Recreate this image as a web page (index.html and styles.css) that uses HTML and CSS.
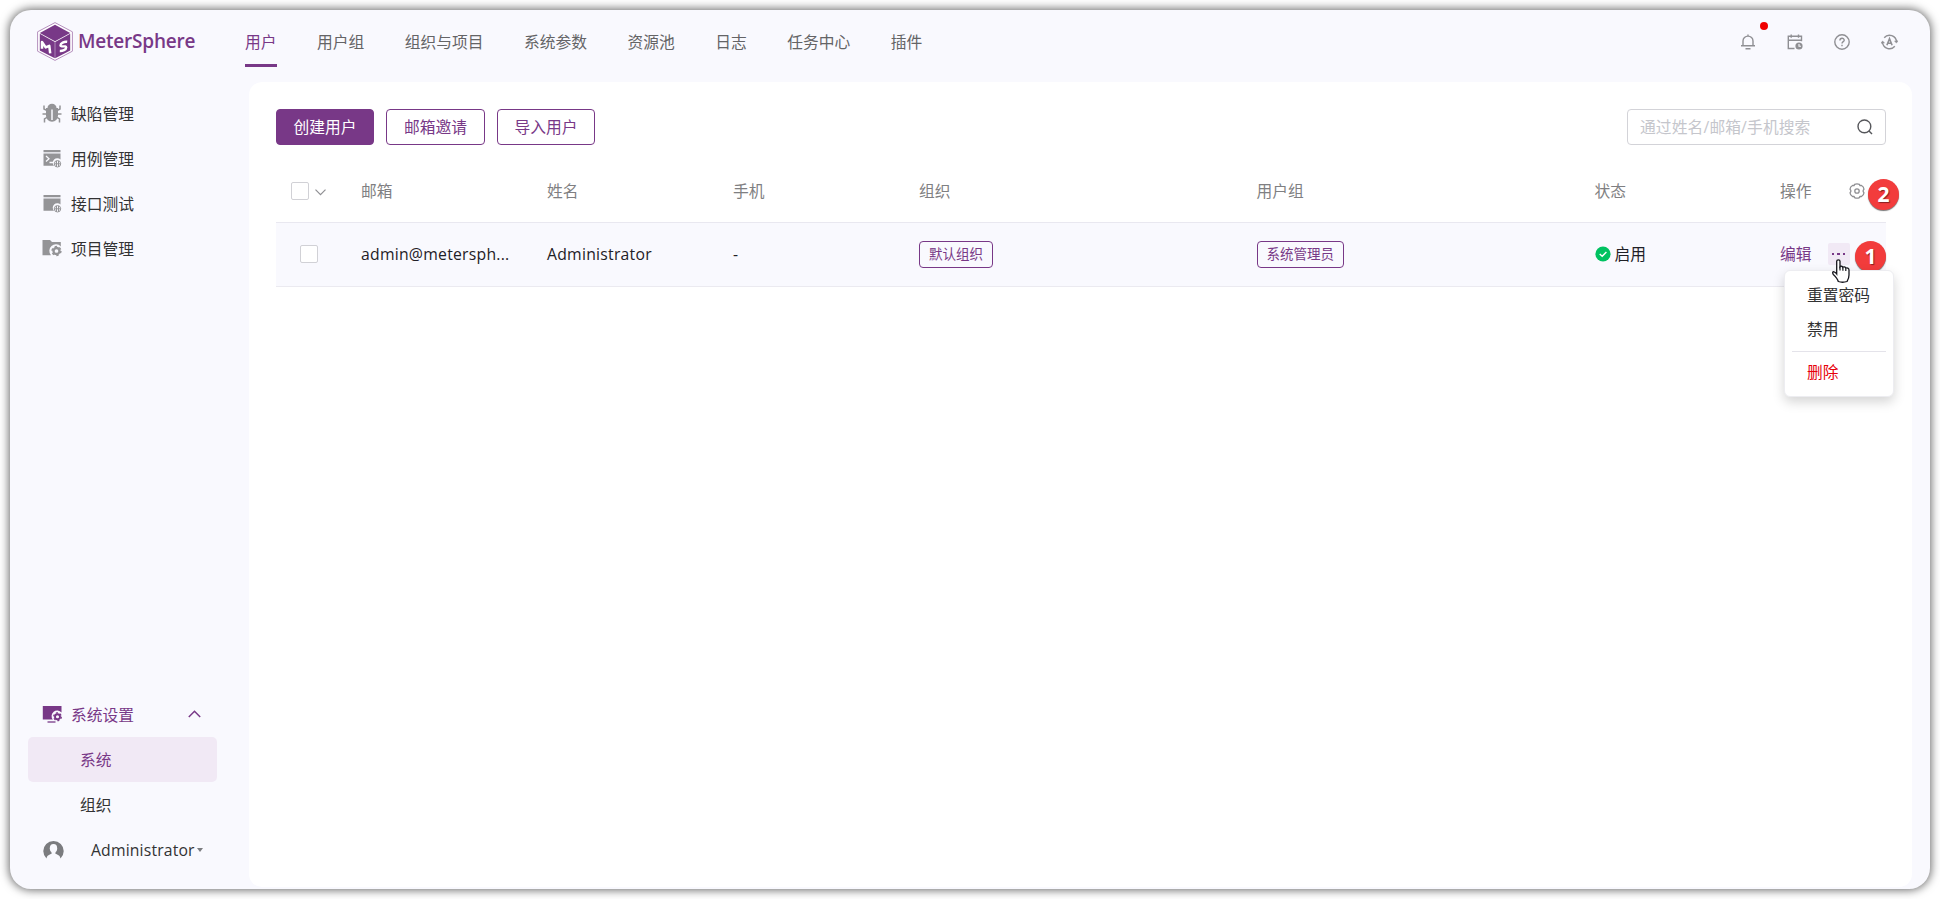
FILE: index.html
```html
<!DOCTYPE html>
<html lang="zh-CN">
<head>
<meta charset="utf-8">
<title>MeterSphere</title>
<link rel="stylesheet" href="styles.css">
</head>
<body>
<div class="window">
  <header class="topbar">
    <div class="brand">
      <svg class="brand-logo" viewBox="0 0 36 39" width="36" height="39">
        <path d="M18 .6 35.4 9.8v19.4L18 38.4.6 29.2V9.8z" fill="#fff" stroke="#b48fbd" stroke-width="1"/>
        <path d="M18 2.800 33.200 11 18 19.300 2.800 11z" fill="#783887"/>
        <path d="M2.800 11.800 17.800 19.900V36.200L2.800 28.400z" fill="#783887"/>
        <path d="M33.200 11.800 18.200 19.900v16.300l15-7.800z" fill="#783887"/>
        <path d="M5 26.800V20l3.700 5.400 3.600-1.600.9 7.600" fill="none" stroke="#fff" stroke-width="2.500" stroke-linejoin="round"/>
        <path d="M30.200 19.800c-3-.4-6.800 1.200-6.700 3.600.1 1.900 5.700-.1 5.700 2 0 2.300-3.600 3.700-6.400 3.600" fill="none" stroke="#fff" stroke-width="2.400"/>
      </svg>
      <span class="brand-name">MeterSphere</span>
    </div>
    <nav class="tabs">
      <a class="tab tab-active">用户</a><a class="tab">用户组</a><a class="tab">组织与项目</a><a class="tab">系统参数</a><a class="tab">资源池</a><a class="tab">日志</a><a class="tab">任务中心</a><a class="tab">插件</a>
    </nav>
    <div class="tools">
      <span class="tool"><svg width="16" height="16" viewBox="0 0 16 16"><path d="M8 .5v1.800M3 11.500V7a5 4.900 0 0 1 10 0v4.500M1 11.700h14M5.500 14.700h5"/></svg><i class="dot"></i></span>
      <span class="tool"><svg width="16" height="16" viewBox="0 0 16 16"><path d="M7.500 14.500H1.300V2.200h13.200v5M1.300 6.200h13.200M4.200.5v3.300M11.500.5v3.300"/><circle cx="12" cy="12" r="3.600" fill="#8f8f93" stroke="none"/><path d="M12 10v2.200h2" stroke="#f9f9fe" stroke-width="1.100"/></svg></span>
      <span class="tool"><svg width="16" height="16" viewBox="0 0 16 16"><circle cx="8" cy="8" r="7.200"/><path d="M5.900 6.500C5.900 3.400 10.200 3.600 10.200 6.200 10.200 7.700 8 7.700 8 9.500M8 10.800v1.400"/></svg></span>
      <span class="tool"><svg width="17" height="16" viewBox="0 0 17 16"><path d="M3.200 3.700A7 7 0 0 1 15.500 8M13.800 12.300A7 7 0 0 1 1.500 8"/><path d="M0 9.200 1.500 7l2 1.800zM17 6.800 15.500 9l-2-1.800z" fill="#8f8f93" stroke-width=".5"/><path d="m5.900 11.200 2.600-6.500 2.600 6.500M6.800 9.300h3.400" stroke-width="1.600"/></svg></span>
    </div>
  </header>
  <div class="body">
    <aside class="sidebar">
      <ul class="menu">
        <li class="menu-item"><svg class="menu-icon" width="20" height="20" viewBox="0 0 20 20"><g fill="none" stroke="#949497" stroke-width="1.500"><path d="M5 7.500 2 6V2.500M15 7.500 18 6V2.500M5 11H.5M15 11h4.500M5.500 14 2.500 16v3.500M14.500 14l3 2v3.500"/></g><path d="M5.500 5a4.500 4.200 0 0 1 9 0z" fill="#949497"/><path d="M4 5h12v7.500a6 6.200 0 0 1-12 0z" fill="#949497"/><path d="M10 6.500V17" stroke="#f9f9fe" stroke-width="1.500"/></svg>缺陷管理</li>
        <li class="menu-item"><svg class="menu-icon" width="20" height="20" viewBox="0 0 20 20"><path d="M1.500 2h17v2.300h-17zM1.500 5.500h17v6a4.500 4.500 0 0 0-6.500 6.300H1.500z" fill="#949497"/><path d="m4 8 3 2.800-3 2.800M7.500 14.500H11" fill="none" stroke="#f9f9fe" stroke-width="1.300"/><g fill="none" stroke="#949497"><circle cx="15.500" cy="15.800" r="3.200"/><path d="M14.500 12.800v6M16.500 12.800v6M12.500 15.800h6"/></g></svg>用例管理</li>
        <li class="menu-item"><svg class="menu-icon" width="20" height="20" viewBox="0 0 20 20"><path d="M1.500 2h17v2.300h-17zM1.500 5.500h17v6a4.500 4.500 0 0 0-6.500 6.300H1.500z" fill="#949497"/><g fill="none" stroke="#949497"><circle cx="15.500" cy="15.800" r="3.200"/><path d="M14.500 12.800v6M16.500 12.800v6M12.500 15.800h6"/></g></svg>接口测试</li>
        <li class="menu-item"><svg class="menu-icon" width="20" height="20" viewBox="0 0 20 20"><path d="M.5 2h7.500l2 2h8.800v4.500A6 6 0 0 0 9 17.300H.5z" fill="#949497"/><circle cx="14.500" cy="13" r="3" fill="none" stroke="#949497" stroke-width="2.300"/><circle cx="14.500" cy="13" r="4.400" fill="none" stroke="#949497" stroke-width="1.500" stroke-dasharray="2.300"/></svg>项目管理</li>
      </ul>
      <ul class="menu menu-bottom">
        <li class="menu-item purple"><svg class="menu-icon" width="20" height="20" viewBox="0 0 20 20"><path d="M.8 2h18.700V8.500A5.500 5.500 0 0 0 10.800 15.500H.8z" fill="#783887"/><path d="M5.500 18h8" stroke="#783887" stroke-width="1.300"/><circle cx="15.500" cy="12.700" r="2.500" fill="none" stroke="#783887" stroke-width="1.900"/><circle cx="15.500" cy="12.700" r="3.800" fill="none" stroke="#783887" stroke-width="1.300" stroke-dasharray="1.990"/></svg>系统设置<svg class="chev" width="13" height="8" viewBox="0 0 13 8"><path d="m.8 7 5.700-5.700L12.200 7" fill="none" stroke="#783887" stroke-width="1.500"/></svg></li>
        <li class="menu-item sub selected">系统</li>
        <li class="menu-item sub">组织</li>
        <li class="menu-item account"><svg width="21" height="20" viewBox="0 0 21 20"><path d="M3.500 18.500A10.200 10.200 0 1 1 17.500 18.500C17 15.500 15 14 10.500 14S4 15.500 3.500 18.500z" fill="#7b7c7f"/><ellipse cx="10.500" cy="8.300" rx="3.700" ry="4.300" fill="#f9f9fe"/><path d="M8.500 11h4v3l2 1h-8l2-1z" fill="#f9f9fe"/></svg><span class="account-name">Administrator</span><i class="caret"></i></li>
      </ul>
    </aside>
    <main class="panel">
      <div class="actions">
        <button class="btn btn-primary">创建用户</button>
        <button class="btn btn-mid">邮箱邀请</button>
        <button class="btn">导入用户</button>
        <div class="search"><span>通过姓名/邮箱/手机搜索</span><svg width="16" height="16" viewBox="0 0 16 16" fill="none" stroke="#55565a" stroke-width="1.400"><circle cx="7.400" cy="7.400" r="6.400"/><path d="m12 12 3 3"/></svg></div>
      </div>
      <div class="table">
        <div class="row head">
          <div class="cell-check"><i class="box"></i><svg class="check-chev" width="11" height="7" viewBox="0 0 11 7"><path d="m.5.6 5 5 5-5" fill="none" stroke="#8f8f93" stroke-width="1.200"/></svg></div>
          <div>邮箱</div><div>姓名</div><div>手机</div><div>组织</div><div>用户组</div><div>状态</div>
          <div class="cell-ops">操作<svg class="gear" width="16" height="16" viewBox="0 0 16 16" fill="none" stroke="#8f8f93" stroke-width="1.300" stroke-linejoin="round"><path d="M5.600 1.400Q8 .2 10.400 1.400L11 2.600 12.500 2.500Q14.800 3.800 15 6.200L14.200 7.300v1.400L15 9.800Q14.800 12.200 12.500 13.500L11 13.400 10.400 14.600Q8 15.800 5.600 14.600L5 13.400 3.500 13.500Q1.200 12.200 1 9.800L1.800 8.700V7.300L1 6.200Q1.200 3.800 3.500 2.500L5 2.600z"/><circle cx="8" cy="8" r="2.200"/></svg><b class="mark mark-two">2</b></div>
        </div>
        <div class="row record">
          <div class="cell-check"><i class="box"></i></div>
          <div class="latin">admin@metersph...</div><div class="latin">Administrator</div><div>-</div><div><span class="tag">默认组织</span></div><div><span class="tag">系统管理员</span></div>
          <div class="status"><svg width="16" height="16" viewBox="0 0 16 16"><circle cx="8" cy="8" r="7.600" fill="#00c261"/><path d="m4.700 8 2.500 2.300 4.200-4.200" fill="none" stroke="#fff" stroke-width="1.400"/></svg>启用</div>
          <div class="cell-ops purple">编辑<span class="more"><i></i><i></i><i></i></span>
            <b class="mark mark-one">1</b>
            <div class="dropdown"><div>重置密码</div><div>禁用</div><hr><div class="danger">删除</div></div>
            <svg class="pointer" width="18" height="24" viewBox="0 0 18 24"><path d="M6.300 22.500Q5.500 19.500 1.300 15.500C.2 13.500.7 12.600 2 12.800c1 .2 2 1.200 2.700 2.200V2.200C4.700.3 8 .3 8 2.200v5.500c.5-.8 2.600-.6 2.800.6.700-.7 2.600-.4 2.900.8 1.300-.6 3.300-.2 3.300 1.900V16c0 3-1 4.500-2 6.500Q10.500 24 6.300 22.500z" fill="#fff" stroke="#15151c" stroke-width="1.300"/><path d="M8 7.500v4M10.900 8.500v3.200M13.800 9.500V12" stroke="#15151c" stroke-width="1.200"/></svg>
          </div>
        </div>
      </div>
    </main>
  </div>
</div>
</body>
</html>
```

FILE: styles.css
```css
* { box-sizing: border-box; }
body {
  margin: 0;
  height: 899px;
  padding: 10px;
  overflow: hidden;
  background: #fff;
  color: #323233;
  font: 15.75px/24px "Open Sans", "Noto Sans CJK SC", sans-serif;
}
.window {
  display: flex;
  flex-direction: column;
  height: 879px;
  border-radius: 21px;
  background: #f9f9fe;
  box-shadow: 0 0 10px 1px rgba(0, 0, 0, .6);
}
.topbar { display: flex; height: 72px; flex: none; }
.brand { display: flex; width: 235px; padding: 12px 0 0 27px; gap: 5px; }
.brand-name { color: #783887; font-size: 19px; font-weight: 600; line-height: 39px; letter-spacing: -.2px; }
.tabs { display: flex; gap: 40.5px; padding-top: 20px; color: #646466; }
.tab { height: 37px; line-height: 25px; }
.tab-active { color: #783887; border-bottom: 3px solid #783887; }
.tools { display: flex; margin-left: auto; padding: 24px 32px 0 0; gap: 31px; }
.tool { position: relative; height: 17px; line-height: 0; }
.tool svg { fill: none; stroke: #8f8f93; stroke-width: 1.4; }
.dot { position: absolute; left: 20px; top: -12px; width: 8px; height: 8px; border-radius: 50%; background: #f00000; }

.body { display: flex; flex: 1; min-height: 0; padding: 0 18px 2px 0; }
.sidebar { display: flex; flex-direction: column; flex: none; width: 239px; padding: 9px 32px 0 18px; }
.menu { margin: 0; padding: 0; list-style: none; }
.menu-bottom { margin-top: auto; padding-bottom: 15px; }
.menu-item { display: flex; align-items: center; height: 45px; padding: 1px 16px 0 14px; gap: 9px; }
.menu-icon { flex: none; margin-top: -3px; }
.purple { color: #783887; }
.chev { margin: -3px 0 0 auto; }
.sub { padding-left: 52px; }
.selected { background: #f1e9f5; border-radius: 5px; color: #783887; }
.account { padding: 0 13px 0 15px; gap: 0; }
.account-name { margin-left: 27px; letter-spacing: .16px; }
.caret { margin-left: 2px; border: 3px solid transparent; border-top: 4px solid #7b7c7f; border-bottom: 0; }

.panel { flex: 1; padding: 27px 26px 0 27px; border-radius: 13px; background: #fff; }
.actions { display: flex; gap: 12px; }
.btn { width: 98px; height: 36px; padding: 0; border: 1px solid #783887; border-radius: 4px; background: #fff; color: #783887; font: inherit; }
.btn-mid { width: 99px; }
.btn-primary { background: #783887; color: #fff; }
.search { display: flex; align-items: center; justify-content: space-between; width: 259px; height: 36px; margin-left: auto; padding: 0 12px; border: 1px solid #d3d3d8; border-radius: 4px; color: #c5c6cc; letter-spacing: .12px; }

.table { margin-top: 15px; }
.row { display: grid; grid-template-columns: 85px 186px 186px 186px 337.5px 338px 185.5px 1fr; align-items: center; color: #1f2026; }
.head { height: 63px; border-bottom: 1px solid #e9e8f0; color: #7f7f82; }
.record { height: 64px; padding-bottom: 1px; border-bottom: 1px solid #ebeaf0; background: #f9f9fe; }
.latin { letter-spacing: .25px; }
.cell-check { display: flex; align-items: center; gap: 6px; padding-left: 15px; }
.check-chev { margin-top: 3px; }
.record .cell-check { padding-left: 24px; }
.box { width: 18px; height: 18px; border: 1px solid #d1d1d6; border-radius: 2px; background: #fff; }
.tag { display: inline-block; height: 27px; padding: 0 9px; border: 1px solid #783887; border-radius: 4px; color: #783887; font-size: 13.5px; line-height: 25px; vertical-align: middle; }
.status { display: flex; align-items: center; gap: 4px; }
.cell-ops { position: relative; display: flex; align-items: center; }
.row .cell-ops.purple { color: #783887; }
.gear { margin-left: 37px; }
.more { display: flex; align-items: center; justify-content: center; gap: 3px; width: 22px; height: 22px; margin-left: 16px; border-radius: 2px; background: #f1e9f5; }
.more i { width: 2.4px; height: 2.4px; background: #783887; }
.mark { position: absolute; width: 31px; height: 31px; border-radius: 50%; background: #f23c3c; box-shadow: 0 1px 1px rgba(60, 60, 60, .7); color: #fff; font: bold 21px/31px "Open Sans", sans-serif; text-align: center; text-shadow: 1px 1px 1px rgba(0, 0, 0, .45); }
.mark-two { left: 88px; top: 0; }
.mark-one { left: 75px; top: -1px; }
.dropdown { position: absolute; left: 4px; top: 28px; width: 110px; height: 127px; padding: 8px 7px 6px; border: 1px solid #ededf1; border-radius: 6px; background: #fff; box-shadow: 0 5px 12px rgba(0, 0, 0, .17); color: #323233; }
.dropdown div { height: 34px; padding-left: 15px; line-height: 33px; white-space: nowrap; }
.dropdown hr { height: 1px; margin: 4px 0; border: 0; background: #e4e3ea; }
.dropdown .danger { color: #e6000a; }
.pointer { position: absolute; left: 52px; top: 17px; }
```
